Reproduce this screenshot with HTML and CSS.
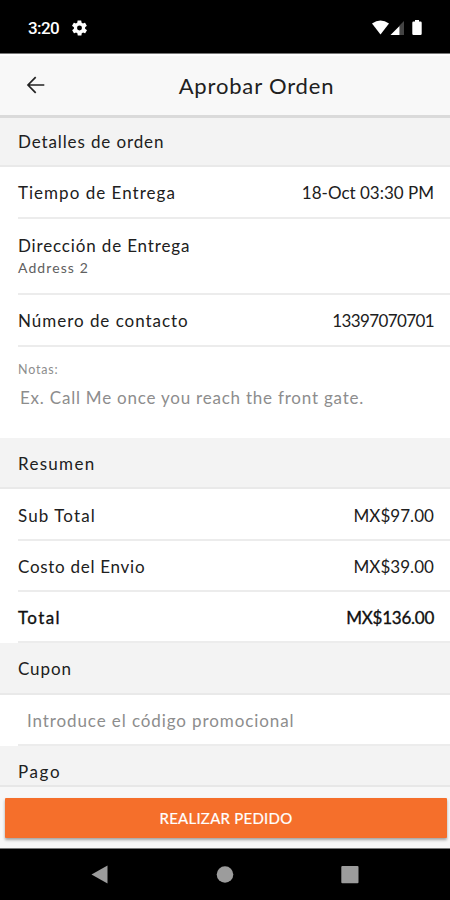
FILE: index.html
```
<!DOCTYPE html>
<html lang="es">
<head>
<meta charset="utf-8">
<title>Aprobar Orden</title>
<link rel="stylesheet" href="styles.css">
</head>
<body>
<div class="phone">
  <div class="status">
    <span class="clock">3:20</span>
    <svg class="gear" width="15" height="16" viewBox="2 2 20 20"><path fill="#fff" fill-rule="evenodd" d="M19.4 13c0-.3.1-.6.1-1s0-.7-.1-1l2.1-1.600c.2-.2.2-.4.100-.6l-2-3.500c-.1-.2-.4-.3-.6-.2l-2.500 1c-.5-.4-1.100-.7-1.700-1l-.4-2.600c0-.3-.2-.5-.5-.5h-4c-.3 0-.5.2-.5.4l-.4 2.700c-.6.200-1.100.600-1.700 1l-2.500-1c-.2-.1-.5 0-.6.200l-2 3.500c-.1.200-.1.400.1.600L4.600 11c0 .3-.1.700-.1 1s0 .7.100 1l-2.100 1.600c-.2.200-.2.400-.1.600l2 3.500c.1.200.4.300.6.200l2.500-1c.5.400 1.100.7 1.700 1l.4 2.600c0 .3.200.5.500.5h4c.3 0 .5-.2.500-.4l.4-2.700c.6-.2 1.100-.6 1.700-1l2.500 1c.2.1.5 0 .6-.2l2-3.500c.1-.2.1-.4-.1-.6zM12 15.300a3.300 3.300 0 1 1 0-6.600 3.300 3.300 0 0 1 0 6.600z"/></svg>
    <svg class="signals" width="53" height="17" viewBox="0 0 53 17">
      <path fill="#fff" d="M0 4.500Q8.500 -1.500 17 4.500L8.500 15.500z"/>
      <path fill="#444" d="M27.500 6.500L32 2v14H27.500z"/>
      <path fill="#fff" d="M18.500 16l9-9v9z"/>
      <path fill="#fff" d="M43 1h4v1.500h1.500q1.200 0 1.200 1.200v11.100q0 1.200-1.200 1.200h-7q-1.200 0-1.200-1.200V3.700q0-1.200 1.200-1.200h1.500z"/>
    </svg>
  </div>
  <header class="header">
    <svg class="back" width="20" height="20" viewBox="0 0 20 20" fill="none" stroke="#222" stroke-width="1.700"><path d="M18.300 10H2.500M9.700 2.200L2 10l7.700 7.800"/></svg>
    <h1 class="title">Aprobar Orden</h1>
  </header>
  <main class="content">
    <h2 class="section first"><span class="t-detalles">Detalles de orden</span></h2>
    <div class="row"><span class="t-tiempo">Tiempo de Entrega</span><span class="t-fecha">18-Oct 03:30 PM</span></div>
    <div class="row address">
      <span class="t-direccion">Dirección de Entrega</span>
      <small class="sub">Address 2</small>
    </div>
    <div class="row"><span class="t-numero">Número de contacto</span><span class="t-telefono">13397070701</span></div>
    <div class="notes">
      <div class="notes-label">Notas:</div>
      <div class="notes-text">Ex. Call Me once you reach the front gate.</div>
    </div>
    <h2 class="section"><span class="t-resumen">Resumen</span></h2>
    <div class="row"><span class="t-sub">Sub Total</span><span class="t-monto">MX$97.00</span></div>
    <div class="row"><span class="t-envio">Costo del Envio</span><span class="t-monto">MX$39.00</span></div>
    <div class="row total"><span class="t-total">Total</span><span class="t-suma">MX$136.00</span></div>
    <h2 class="section"><span class="t-cupon">Cupon</span></h2>
    <div class="row coupon"><span class="t-codigo">Introduce el código promocional</span></div>
    <h2 class="section last"><span class="t-pago">Pago</span></h2>
  </main>
  <footer class="footer"><button class="order" type="button">REALIZAR PEDIDO</button></footer>
  <nav class="nav">
    <svg width="450" height="51" viewBox="0 0 450 51" fill="#9c9c9c"><path d="M91.500 25.500L107.500 16.500v18z"/><circle cx="225" cy="25.500" r="8.300"/><rect x="341.300" y="17" width="17.200" height="17.200" rx="1"/></svg>
  </nav>
</div>
</body>
</html>
```
FILE: styles.css
```
* { box-sizing: border-box; }
body { margin: 0; font-family: Lato, "Open Sans", sans-serif; font-size: 17px; color: #202020; background: #fff; }
h1, h2 { margin: 0; font-weight: 400; }
span, small { white-space: nowrap; }
.phone { width: 450px; height: 900px; display: flex; flex-direction: column; overflow: hidden; }

.status { height: 54px; flex: none; display: flex; align-items: center; padding: 2px 25px 0 28px; background: #000; border-bottom: 1px solid #777; }
.clock { font: 500 17px/20px Roboto, sans-serif; color: #fff; letter-spacing: -0.6px; width: 44px; padding-top: 1px; }
.signals { margin-left: auto; }

.header { height: 61px; flex: none; display: grid; grid-template-columns: 63px 1fr; align-items: center; background: #f8f8f8; border-top: 2px solid #fff; }
.back { margin: 0 0 2px 26px; }
.title { text-align: center; font-size: 22px; letter-spacing: .83px; line-height: 28px; }

.content { flex: 1; min-height: 0; overflow: hidden; border-top: 3px solid #dadada; }
.section { height: 51.3px; display: flex; align-items: center; padding: 1px 18px 0; font-size: 17px; background: #f3f3f3; border-bottom: 2px solid #e9e9e9; }
.first { height: 49.3px; padding: 0 18px 1px; }
.last { height: 52px; }
.row { height: 51.3px; margin-left: 18px; padding: 2px 16px 0 0; display: flex; align-items: center; justify-content: space-between; border-bottom: 2px solid #ececec; }
.address { height: 76.7px; flex-direction: column; align-items: flex-start; justify-content: center; padding-top: 0; padding-bottom: 1px; }
.sub { font-size: 14px; line-height: 20px; letter-spacing: 1.1px; color: #606060; }
.address span { line-height: 25px; }
.notes { height: 91.5px; padding: 15px 18px 0; color: #8d8d8d; }
.notes-label { font-size: 12.500px; line-height: 16px; letter-spacing: .8px; }
.notes-text { margin: 8px 0 0 2px; line-height: 24px; letter-spacing: .78px; white-space: nowrap; }
.total { color: #101010; -webkit-text-stroke: .35px #101010; }
.coupon { padding-left: 9px; color: #8d8d8d; }

.t-detalles { letter-spacing: .88px; }
.t-tiempo { letter-spacing: 1.02px; }
.t-fecha { letter-spacing: 0; }
.t-direccion { letter-spacing: .85px; }
.t-numero { letter-spacing: .97px; }
.t-telefono { letter-spacing: -.6px; }
.t-resumen { letter-spacing: 1.3px; }
.t-sub { letter-spacing: 1.1px; }
.t-monto { letter-spacing: .05px; }
.t-envio { letter-spacing: .72px; }
.t-total { letter-spacing: 1.4px; }
.t-suma { letter-spacing: -.25px; }
.t-cupon { letter-spacing: .9px; }
.t-codigo { letter-spacing: .9px; }
.t-pago { letter-spacing: 1.6px; }

.footer { height: 63px; flex: none; padding: 11px 3px 0 5px; background: #f7f7f7; border-top: 2px solid #e7e7e7; }
.order { display: block; width: 100%; height: 39.5px; padding: 0; border: 0; border-radius: 1px; background: #f56f2b; color: #fff; font: 15px/40px Lato, sans-serif; letter-spacing: .25px; -webkit-text-stroke: .2px #fff; box-shadow: 0 2px 3px rgba(0,0,0,.35); }
.nav { height: 52px; flex: none; background: #000; border-top: 1px solid #777; }
.nav svg { display: block; }
```
